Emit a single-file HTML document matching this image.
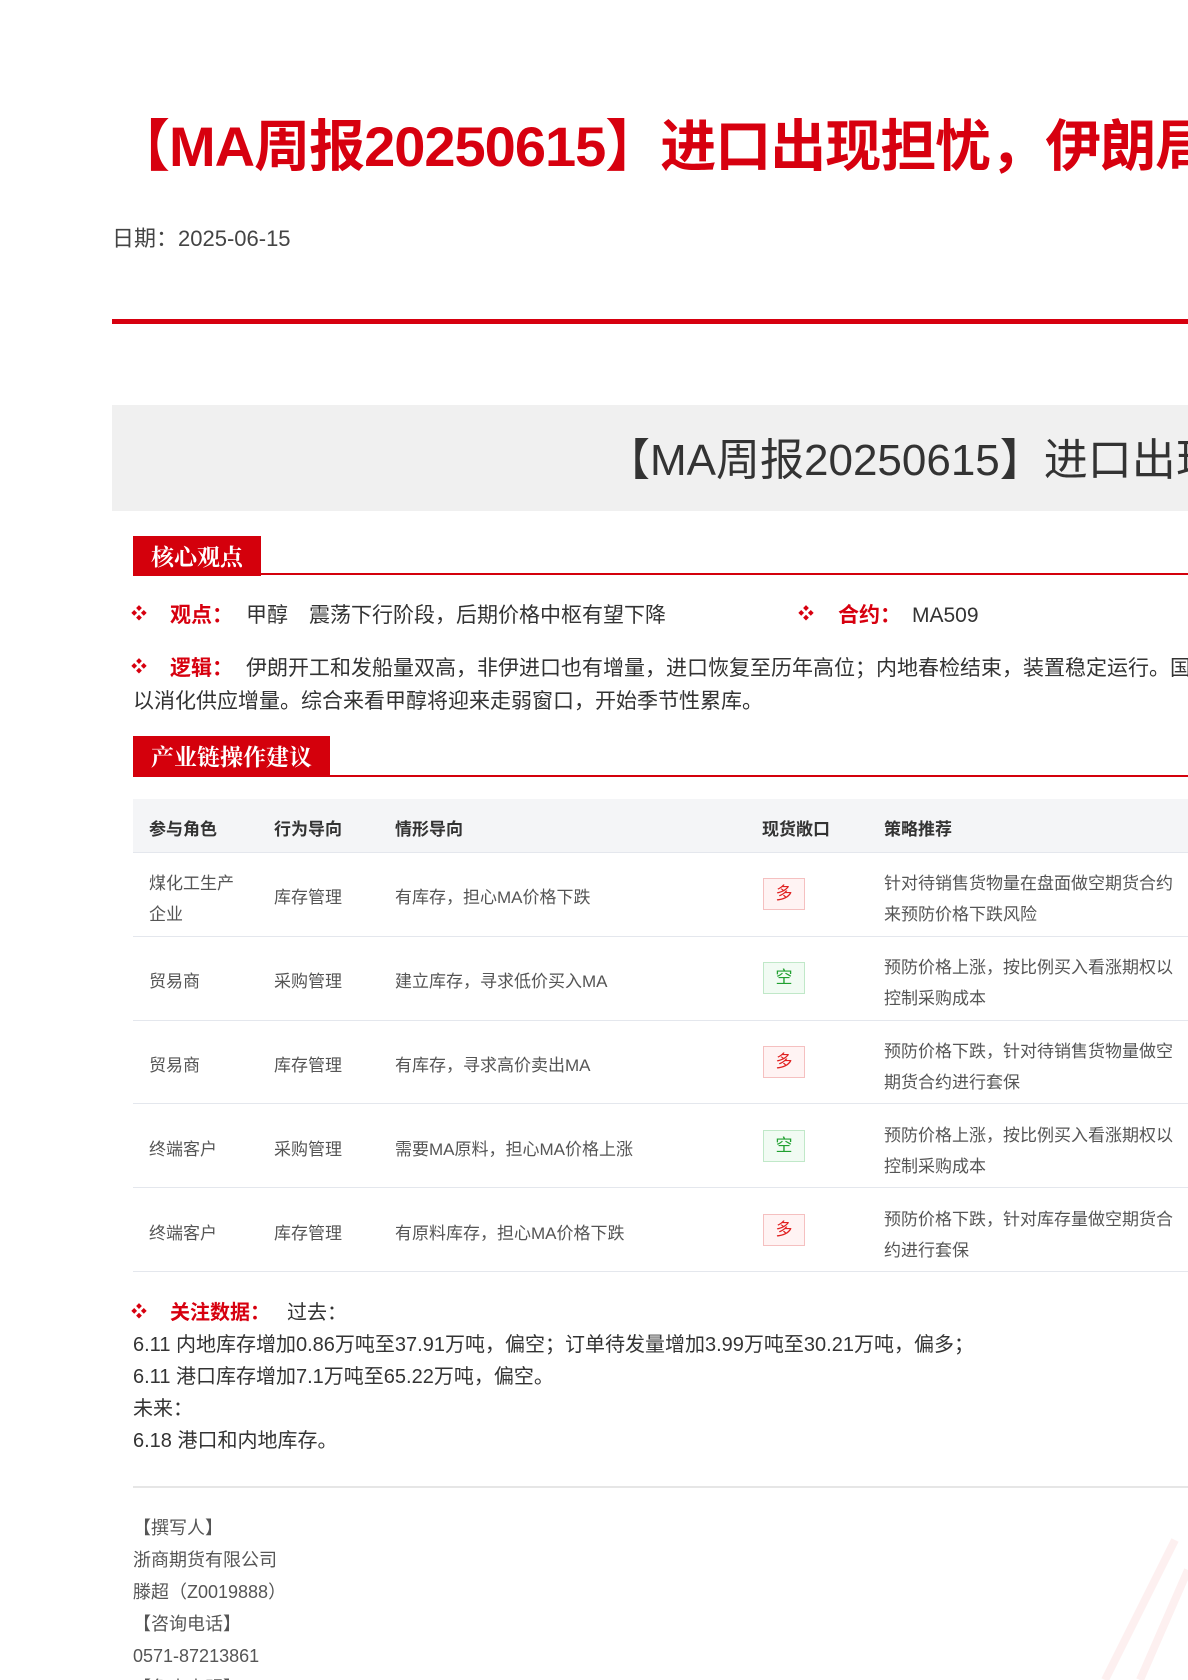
<!DOCTYPE html>
<html><head><meta charset="utf-8"><style>
html,body{margin:0;padding:0;width:1188px;height:1680px;overflow:hidden;background:#fff;position:relative;font-family:"Liberation Sans","Noto Sans CJK SC",sans-serif;color:#333}
#w{position:absolute;left:0;top:0;width:1188px;height:1680px;overflow:hidden}
.a{position:absolute;white-space:nowrap}
.red{color:#d7000f}
.tab{position:absolute;background:#d4000c;color:#fff;font-family:"Noto Serif CJK SC","Noto Sans CJK SC",serif;font-weight:bold;font-size:23px;line-height:40px;padding:0 18px}
.rule{position:absolute;left:133px;right:0;height:2px;background:#d4000c}
.b{color:#d7000f;font-size:16px;line-height:20px}
.t{font-size:17px;color:#555}
.th{font-size:17px;font-weight:bold;color:#333}
.badge{position:absolute;left:763px;width:40px;height:30px;border:1px solid;font-size:17px;text-align:center;line-height:30px}
.duo{color:#e02020;border-color:#f5c0c0;background:#fff3f3}
.kong{color:#20a030;border-color:#c0e8c8;background:#f1fbf3}
.hl{position:absolute;left:133px;right:0;height:1px;background:#e4e7ed}
.f{font-size:18px;color:#555}
.l21{font-size:21px;line-height:28px}
</style></head><body><div id="w">
<div class="a red" style="left:114px;top:112px;font-size:56px;font-weight:bold;line-height:70px;letter-spacing:-1px">【MA周报20250615】进口出现担忧，伊朗局势扰动</div>
<div class="a" style="left:112px;top:224px;font-size:22px;color:#444;line-height:30px">日期：2025-06-15</div>
<div class="a" style="left:112px;top:319px;right:0;height:5px;background:#d7000f"></div>
<div class="a" style="left:112px;top:405px;right:0;height:106px;background:#f0f0f0"></div>
<div class="a" style="left:606px;top:433px;font-size:44px;line-height:56px;color:#333">【MA周报20250615】进口出现担忧</div>

<div class="tab" style="left:133px;top:536px">核心观点</div>
<div class="rule" style="top:573px"></div>
<div class="a b" style="left:131px;top:605px">❖</div>
<div class="a red l21" style="left:170px;top:602px;font-weight:bold">观点：</div>
<div class="a l21" style="left:246px;top:602px">甲醇　震荡下行阶段，后期价格中枢有望下降</div>
<div class="a b" style="left:798px;top:605px">❖</div>
<div class="a red l21" style="left:838px;top:602px;font-weight:bold">合约：</div>
<div class="a l21" style="left:912px;top:602px">MA509</div>
<div class="a b" style="left:131px;top:658px">❖</div>
<div class="a red l21" style="left:170px;top:655px;font-weight:bold">逻辑：</div>
<div class="a l21" style="left:246px;top:655px">伊朗开工和发船量双高，非伊进口也有增量，进口恢复至历年高位；内地春检结束，装置稳定运行。国内需求偏弱，难</div>
<div class="a l21" style="left:133px;top:688px">以消化供应增量。综合来看甲醇将迎来走弱窗口，开始季节性累库。</div>

<div class="tab" style="left:133px;top:736px">产业链操作建议</div>
<div class="rule" style="top:775px"></div>

<div class="a" style="left:133px;top:799px;right:0;height:53px;background:#f4f5f7"></div>
<div class="hl" style="top:852px"></div>
<div class="a th" style="left:149px;top:815px">参与角色</div>
<div class="a th" style="left:274px;top:815px">行为导向</div>
<div class="a th" style="left:395px;top:815px">情形导向</div>
<div class="a th" style="left:762px;top:815px">现货敞口</div>
<div class="a th" style="left:884px;top:815px">策略推荐</div>

<div class="a t" style="left:149px;top:868px;line-height:31px;white-space:normal;width:100px">煤化工生产<br>企业</div>
<div class="a t" style="left:274px;top:883px">库存管理</div>
<div class="a t" style="left:395px;top:883px">有库存，担心MA价格下跌</div>
<div class="badge duo" style="top:878px">多</div>
<div class="a t" style="left:884px;top:868px;line-height:31px">针对待销售货物量在盘面做空期货合约<br>来预防价格下跌风险</div>
<div class="hl" style="top:936px"></div>

<div class="a t" style="left:149px;top:967px">贸易商</div>
<div class="a t" style="left:274px;top:967px">采购管理</div>
<div class="a t" style="left:395px;top:967px">建立库存，寻求低价买入MA</div>
<div class="badge kong" style="top:962px">空</div>
<div class="a t" style="left:884px;top:952px;line-height:31px">预防价格上涨，按比例买入看涨期权以<br>控制采购成本</div>
<div class="hl" style="top:1020px"></div>

<div class="a t" style="left:149px;top:1051px">贸易商</div>
<div class="a t" style="left:274px;top:1051px">库存管理</div>
<div class="a t" style="left:395px;top:1051px">有库存，寻求高价卖出MA</div>
<div class="badge duo" style="top:1046px">多</div>
<div class="a t" style="left:884px;top:1036px;line-height:31px">预防价格下跌，针对待销售货物量做空<br>期货合约进行套保</div>
<div class="hl" style="top:1103px"></div>

<div class="a t" style="left:149px;top:1135px">终端客户</div>
<div class="a t" style="left:274px;top:1135px">采购管理</div>
<div class="a t" style="left:395px;top:1135px">需要MA原料，担心MA价格上涨</div>
<div class="badge kong" style="top:1130px">空</div>
<div class="a t" style="left:884px;top:1120px;line-height:31px">预防价格上涨，按比例买入看涨期权以<br>控制采购成本</div>
<div class="hl" style="top:1187px"></div>

<div class="a t" style="left:149px;top:1219px">终端客户</div>
<div class="a t" style="left:274px;top:1219px">库存管理</div>
<div class="a t" style="left:395px;top:1219px">有原料库存，担心MA价格下跌</div>
<div class="badge duo" style="top:1214px">多</div>
<div class="a t" style="left:884px;top:1204px;line-height:31px">预防价格下跌，针对库存量做空期货合<br>约进行套保</div>
<div class="hl" style="top:1271px"></div>

<div class="a b" style="left:131px;top:1303px">❖</div>
<div class="a red" style="left:170px;top:1299px;font-size:20px;font-weight:bold;line-height:28px">关注数据：</div>
<div class="a" style="left:287px;top:1299px;font-size:20px;line-height:28px">过去：</div>
<div class="a" style="left:133px;top:1329px;font-size:20px;line-height:32px">6.11 内地库存增加0.86万吨至37.91万吨，偏空；订单待发量增加3.99万吨至30.21万吨，偏多；<br>6.11 港口库存增加7.1万吨至65.22万吨，偏空。<br>未来：<br>6.18 港口和内地库存。</div>

<div class="a" style="left:133px;top:1486px;right:0;height:2px;background:#e6e6e6"></div>
<div class="a f" style="left:133px;top:1512px;line-height:32px">【撰写人】<br>浙商期货有限公司<br>滕超（Z0019888）<br>【咨询电话】<br>0571-87213861<br>【免责声明】</div>
<svg class="a" style="left:980px;top:1500px" width="208" height="180"><path d="M195 40 L125 180 M208 70 L160 180" stroke="#fdf0f0" stroke-width="8" fill="none"/></svg>
</div></body></html>
